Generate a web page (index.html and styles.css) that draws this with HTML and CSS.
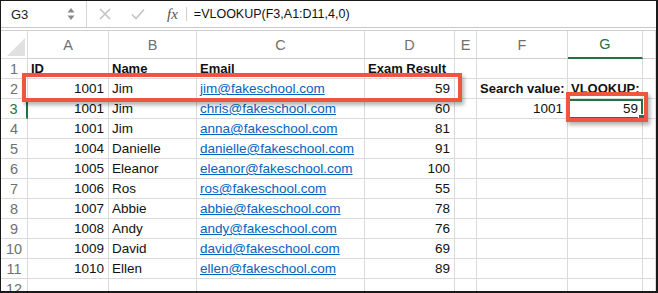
FILE: index.html
```html
<!DOCTYPE html>
<html lang="en">
<head>
  <meta charset="UTF-8">
  <title>VLOOKUP</title>
  <link rel="stylesheet" href="styles.css">
</head>
<body>

  <div class="sheet">
    <div class="fbar">
      <div class="namebox">
        <span class="ref">G3</span>
        <svg class="spin" width="8" height="14" viewBox="0 0 8 14"><path d="M4 1 L7.5 5.5 H0.5 Z M4 13 L7.5 8.5 H0.5 Z" fill="#8a8a8a"/></svg>
      </div>
      <div class="fbtns">
        <svg class="btn" width="12" height="12" viewBox="0 0 12 12"><path d="M1 1 L11 11 M11 1 L1 11" stroke="#c4c4c4" stroke-width="1.6" fill="none"/></svg>
        <svg class="btn" width="14" height="12" viewBox="0 0 14 12"><path d="M1 6.5 L5 10.5 L13 1.5" stroke="#c4c4c4" stroke-width="1.6" fill="none"/></svg>
        <span class="fx">fx</span>
      </div>
      <div class="formula">=VLOOKUP(F3,A1:D11,4,0)</div>
    </div>

    <div class="grid">
      <div class="corner"></div>
      <div class="colhead">A</div>
      <div class="colhead">B</div>
      <div class="colhead">C</div>
      <div class="colhead">D</div>
      <div class="colhead">E</div>
      <div class="colhead">F</div>
      <div class="colhead sel">G</div>
      <div class="colhead"></div>

      <div class="rowhead">1</div>
      <div class="cell b">ID</div>
      <div class="cell b">Name</div>
      <div class="cell b">Email</div>
      <div class="cell b">Exam Result</div>
      <div class="cell"></div>
      <div class="cell"></div>
      <div class="cell"></div>
      <div class="cell"></div>

      <div class="rowhead">2</div>
      <div class="cell num">1001</div>
      <div class="cell">Jim</div>
      <div class="cell"><a href="#">jim@fakeschool.com</a></div>
      <div class="cell num">59</div>
      <div class="cell"></div>
      <div class="cell b">Search value:</div>
      <div class="cell b">VLOOKUP:</div>
      <div class="cell"></div>

      <div class="rowhead sel">3</div>
      <div class="cell num">1001</div>
      <div class="cell">Jim</div>
      <div class="cell"><a href="#">chris@fakeschool.com</a></div>
      <div class="cell num">60</div>
      <div class="cell"></div>
      <div class="cell num">1001</div>
      <div class="cell num active">59<span class="handle"></span></div>
      <div class="cell"></div>

      <div class="rowhead">4</div>
      <div class="cell num">1001</div>
      <div class="cell">Jim</div>
      <div class="cell"><a href="#">anna@fakeschool.com</a></div>
      <div class="cell num">81</div>
      <div class="cell"></div><div class="cell"></div><div class="cell"></div><div class="cell"></div>

      <div class="rowhead">5</div>
      <div class="cell num">1004</div>
      <div class="cell">Danielle</div>
      <div class="cell"><a href="#">danielle@fakeschool.com</a></div>
      <div class="cell num">91</div>
      <div class="cell"></div><div class="cell"></div><div class="cell"></div><div class="cell"></div>

      <div class="rowhead">6</div>
      <div class="cell num">1005</div>
      <div class="cell">Eleanor</div>
      <div class="cell"><a href="#">eleanor@fakeschool.com</a></div>
      <div class="cell num">100</div>
      <div class="cell"></div><div class="cell"></div><div class="cell"></div><div class="cell"></div>

      <div class="rowhead">7</div>
      <div class="cell num">1006</div>
      <div class="cell">Ros</div>
      <div class="cell"><a href="#">ros@fakeschool.com</a></div>
      <div class="cell num">55</div>
      <div class="cell"></div><div class="cell"></div><div class="cell"></div><div class="cell"></div>

      <div class="rowhead">8</div>
      <div class="cell num">1007</div>
      <div class="cell">Abbie</div>
      <div class="cell"><a href="#">abbie@fakeschool.com</a></div>
      <div class="cell num">78</div>
      <div class="cell"></div><div class="cell"></div><div class="cell"></div><div class="cell"></div>

      <div class="rowhead">9</div>
      <div class="cell num">1008</div>
      <div class="cell">Andy</div>
      <div class="cell"><a href="#">andy@fakeschool.com</a></div>
      <div class="cell num">76</div>
      <div class="cell"></div><div class="cell"></div><div class="cell"></div><div class="cell"></div>

      <div class="rowhead">10</div>
      <div class="cell num">1009</div>
      <div class="cell">David</div>
      <div class="cell"><a href="#">david@fakeschool.com</a></div>
      <div class="cell num">69</div>
      <div class="cell"></div><div class="cell"></div><div class="cell"></div><div class="cell"></div>

      <div class="rowhead">11</div>
      <div class="cell num">1010</div>
      <div class="cell">Ellen</div>
      <div class="cell"><a href="#">ellen@fakeschool.com</a></div>
      <div class="cell num">89</div>
      <div class="cell"></div><div class="cell"></div><div class="cell"></div><div class="cell"></div>

      <div class="rowhead">12</div>
      <div class="cell"></div><div class="cell"></div><div class="cell"></div><div class="cell"></div>
      <div class="cell"></div><div class="cell"></div><div class="cell"></div><div class="cell"></div>
    </div>

    <!-- red callout boxes -->
    <div class="mark mark-row"></div>
    <div class="mark mark-cell"></div>
  </div>

</body>
</html>
```

FILE: styles.css
```css
body {
  margin: 0;
  background: #fff;
  font-family: "Liberation Sans", Arial, sans-serif;
}

.sheet {
  position: relative;
  width: 658px;
  height: 293px;
  box-sizing: border-box;
  border: 1px solid #1a1a1a;
  border-width: 1px 2px 2px 1px;
  overflow: hidden;
  background: #fff;
}

/* formula bar */
.fbar {
  display: flex;
  align-items: center;
  height: 26px;
  border-bottom: 1px solid #c9c9c9;
  margin-bottom: 2px;
}

.namebox {
  display: flex;
  align-items: center;
  justify-content: space-between;
  width: 86px;
  height: 100%;
  padding: 0 11px 0 10px;
  box-sizing: border-box;
  border-right: 1px solid #d6d6d6;
  font-size: 13px;
  color: #222;
}

.fbtns {
  display: flex;
  align-items: center;
  height: 14px;
  padding: 0 8px 0 12px;
  border-right: 1px solid #d0d0d0;
}

.btn {
  margin-right: 20px;
}

.fx {
  font-family: "Liberation Serif", "Times New Roman", serif;
  font-style: italic;
  font-size: 15px;
  color: #555;
  margin-left: 2px;
}

.formula {
  padding-left: 7px;
  font-size: 12.5px;
  color: #111;
}

/* grid */
.grid {
  display: grid;
  grid-template-columns: 27px 81px 88px 168px 90px 22px 91px 75px 1fr;
  grid-auto-rows: 20px;
  grid-template-rows: 28px;
  border-top: 1px solid #d0d0d0;
  font-size: 13.5px;
}

.grid > div {
  box-sizing: border-box;
  border-right: 1px solid #dadada;
  border-bottom: 1px solid #dadada;
  white-space: nowrap;
  overflow: hidden;
}

.corner {
  position: relative;
}

.corner::after {
  content: "";
  position: absolute;
  right: 2px;
  bottom: 2px;
  border-style: solid;
  border-width: 0 0 18px 18px;
  border-color: transparent transparent #e0e0e0 transparent;
}

.colhead {
  display: flex;
  align-items: center;
  justify-content: center;
  font-size: 14.5px;
  color: #707070;
  border-bottom-color: #cfcfcf !important;
}

.colhead.sel {
  color: #217346;
  border-bottom: 2px solid #217346 !important;
}

.rowhead {
  display: flex;
  align-items: center;
  justify-content: center;
  font-size: 14.5px;
  color: #707070;
}

.rowhead.sel {
  color: #217346;
  border-right: 2px solid #217346 !important;
}

.cell {
  line-height: 19px;
  padding: 0 3px;
  color: #111;
}

.cell.b {
  font-weight: bold;
  font-size: 13px;
}

.cell.num {
  text-align: right;
  padding-right: 4px;
}

.cell a {
  color: #0563c1;
  text-decoration: underline;
}

.cell.active {
  position: relative;
  overflow: visible !important;
  outline: 2px solid #217346;
  outline-offset: -2px;
}

.handle {
  position: absolute;
  right: -3px;
  bottom: -3px;
  width: 5px;
  height: 5px;
  background: #217346;
  border: 1px solid #fff;
}

/* red callouts */
.mark {
  position: absolute;
  box-sizing: border-box;
  border: 4px solid #ef5540;
  box-shadow: 2px 3px 4px rgba(0, 0, 0, 0.3);
}

.mark-row {
  left: 21px;
  top: 72px;
  width: 440px;
  height: 29px;
}

.mark-cell {
  left: 565px;
  top: 91px;
  width: 82px;
  height: 30px;
}
```
